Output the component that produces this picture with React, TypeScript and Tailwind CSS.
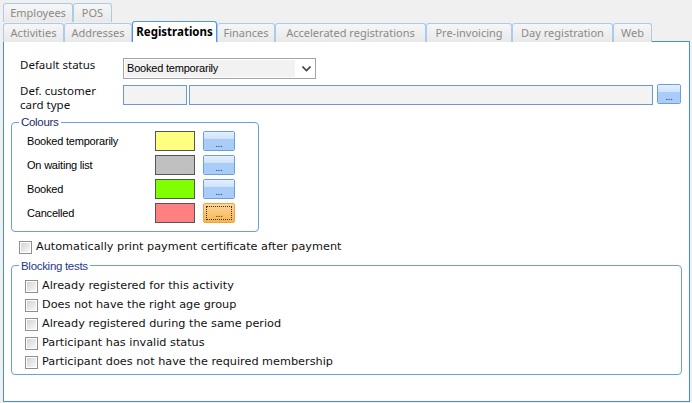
import React from "react";

const tabFont = { fontFamily: '"Noto Sans", "Open Sans", sans-serif' };
const labelFont = { fontFamily: '"Liberation Sans", Arial, sans-serif' };
const verdana = { fontFamily: '"DejaVu Sans", Verdana, sans-serif' };

type Tab = { label: string; w: number; active?: boolean };

const rowOne: Tab[] = [
  { label: "Employees", w: 70 },
  { label: "POS", w: 39 },
];

const rowTwo: Tab[] = [
  { label: "Activities", w: 61 },
  { label: "Addresses", w: 68 },
  { label: "Registrations", w: 85, active: true },
  { label: "Finances", w: 58 },
  { label: "Accelerated registrations", w: 151 },
  { label: "Pre-invoicing", w: 86 },
  { label: "Day registration", w: 101 },
  { label: "Web", w: 39 },
];

const TabButton: React.FC<{ tab: Tab }> = ({ tab }) =>
  tab.active ? (
    <div
      style={{ ...tabFont, width: tab.w }}
      className="relative z-10 -mt-[1px] flex h-[21px] items-center justify-center rounded-t-[3px] border border-b-0 border-[#4f95e6] bg-white text-[11.5px] font-bold text-black"
    >
      {tab.label}
    </div>
  ) : (
    <div
      style={{ ...tabFont, width: tab.w }}
      className="flex h-[19px] items-center justify-center rounded-t-[3px] border border-b-0 border-[#a9cbf0] bg-gradient-to-b from-[#f6f6f6] to-[#e9e9e9] text-[11px] text-[#8a8a8a]"
    >
      {tab.label}
    </div>
  );

const DotsButton: React.FC<{ focused?: boolean; width?: string; className?: string }> = ({
  focused,
  width = "w-[32px]",
  className = "",
}) =>
  focused ? (
    <div
      className={`flex h-[20px] items-center justify-center rounded-[2px] border border-[#f3a23a] bg-gradient-to-b from-[#fdd696] to-[#f8b54f] ${width} ${className}`}
    >
      <div className="flex h-[14px] w-[26px] items-end justify-center border border-dotted border-[#333] pb-[1px] text-[9px] leading-none text-[#222]">
        ...
      </div>
    </div>
  ) : (
    <div
      className={`flex h-[20px] flex-col overflow-hidden rounded-[2px] border border-[#6d9ede] ${width} ${className}`}
    >
      <div className="h-[7px] bg-gradient-to-b from-[#e4effd] to-[#cfe3fb]" />
      <div className="flex flex-1 items-end justify-center bg-[#a9cdf8] pb-[2px] text-[9px] leading-none text-[#1a1a50]">
        ...
      </div>
    </div>
  );

const CheckBox: React.FC = () => (
  <div className="h-[13px] w-[13px] shrink-0 border border-[#8f8f8f] bg-white p-[1px]">
    <div className="h-full w-full bg-gradient-to-br from-[#d4d4d4] to-[#f8f8f8]" />
  </div>
);

const colours = [
  { label: "Booked temporarily", swatch: "bg-[#ffff80]" },
  { label: "On waiting list", swatch: "bg-[#c0c0c0]" },
  { label: "Booked", swatch: "bg-[#80ff00]" },
  { label: "Cancelled", swatch: "bg-[#ff8080]", focused: true },
];

const blockingTests = [
  "Already registered for this activity",
  "Does not have the right age group",
  "Already registered during the same period",
  "Participant has invalid status",
  "Participant does not have the required membership",
];

export default function App() {
  return (
    <div className="h-[403px] w-[692px] overflow-hidden bg-[#f0f0f0] pt-[3px]">
      <div className="flex pl-[3px]">
        {rowOne.map((t) => (
          <TabButton key={t.label} tab={t} />
        ))}
      </div>
      <div className="flex items-end pl-[3px]">
        {rowTwo.map((t) => (
          <TabButton key={t.label} tab={t} />
        ))}
      </div>

      <div className="-mt-[1px] ml-[3px] mr-[2px] h-[361px] border border-[#3f8fe8] bg-white">
        <div className="flex items-start pl-[16px] pt-[16px]">
          <div style={tabFont} className="w-[103px] text-[11.5px] leading-[14px] text-[#111]">
            Default status
          </div>
          <div className="flex h-[21px] w-[193px] items-center border border-[#a4a4a4] bg-white p-[1px]">
            <div
              style={labelFont}
              className="flex h-full w-[170px] items-center bg-[#f2f2f2] pl-[2px] text-[11px] tracking-[-0.2px] text-black"
            >
              Booked temporarily
            </div>
            <svg width="9" height="6" viewBox="0 0 9 6" className="ml-[7px]">
              <path d="M0.5 0.5 L4.5 4.5 L8.5 0.5" stroke="#444" strokeWidth="1.6" fill="none" />
            </svg>
          </div>
        </div>

        <div className="mt-[6px] flex items-start pl-[16px]">
          <div style={tabFont} className="-mt-[1px] w-[103px] text-[11.5px] leading-[14px] text-[#111]">
            Def. customer
            <br />
            card type
          </div>
          <div className="h-[20px] w-[64px] border border-[#6a98d8] bg-[#f3f3f3]" />
          <div className="ml-[2px] h-[20px] w-[464px] border border-[#6a98d8] bg-[#f3f3f3]" />
          <DotsButton width="w-[24px]" className="-mt-[1px] ml-[4px]" />
        </div>

        <fieldset className="ml-[7px] mt-[4px] h-[116px] w-[248px] rounded-[4px] border border-[#6b9ee0]">
          <legend
            style={labelFont}
            className="ml-[7px] px-[2px] text-[11.5px] leading-[12px] tracking-[-0.3px] text-[#1d2a6a]"
          >
            Colours
          </legend>
          <div className="mt-[3px] flex flex-col gap-[4px] pl-[15px]">
            {colours.map((c) => (
              <div key={c.label} className="flex h-[20px] items-center">
                <div
                  style={labelFont}
                  className="w-[128px] text-[11px] tracking-[-0.2px] text-black"
                >
                  {c.label}
                </div>
                <div className={`h-[20px] w-[40px] border border-[#555] ${c.swatch}`} />
                <DotsButton focused={c.focused} className="ml-[8px]" />
              </div>
            ))}
          </div>
        </fieldset>

        <div className="ml-[15px] mt-[7px] flex items-center gap-[4px]">
          <CheckBox />
          <span style={verdana} className="text-[11.25px] text-[#111]">
            Automatically print payment certificate after payment
          </span>
        </div>

        <fieldset className="ml-[7px] mt-[4px] h-[115px] w-[671px] rounded-[4px] border border-[#6b9ee0]">
          <legend
            style={labelFont}
            className="ml-[7px] px-[2px] text-[11.5px] leading-[12px] tracking-[-0.3px] text-[#1d3a8a]"
          >
            Blocking tests
          </legend>
          <div className="mt-[8px] flex flex-col gap-[6px] pl-[13px]">
            {blockingTests.map((t) => (
              <div key={t} className="flex h-[13px] items-center gap-[4px]">
                <CheckBox />
                <span style={verdana} className="text-[11.25px] text-[#111]">
                  {t}
                </span>
              </div>
            ))}
          </div>
        </fieldset>
      </div>
    </div>
  );
}
